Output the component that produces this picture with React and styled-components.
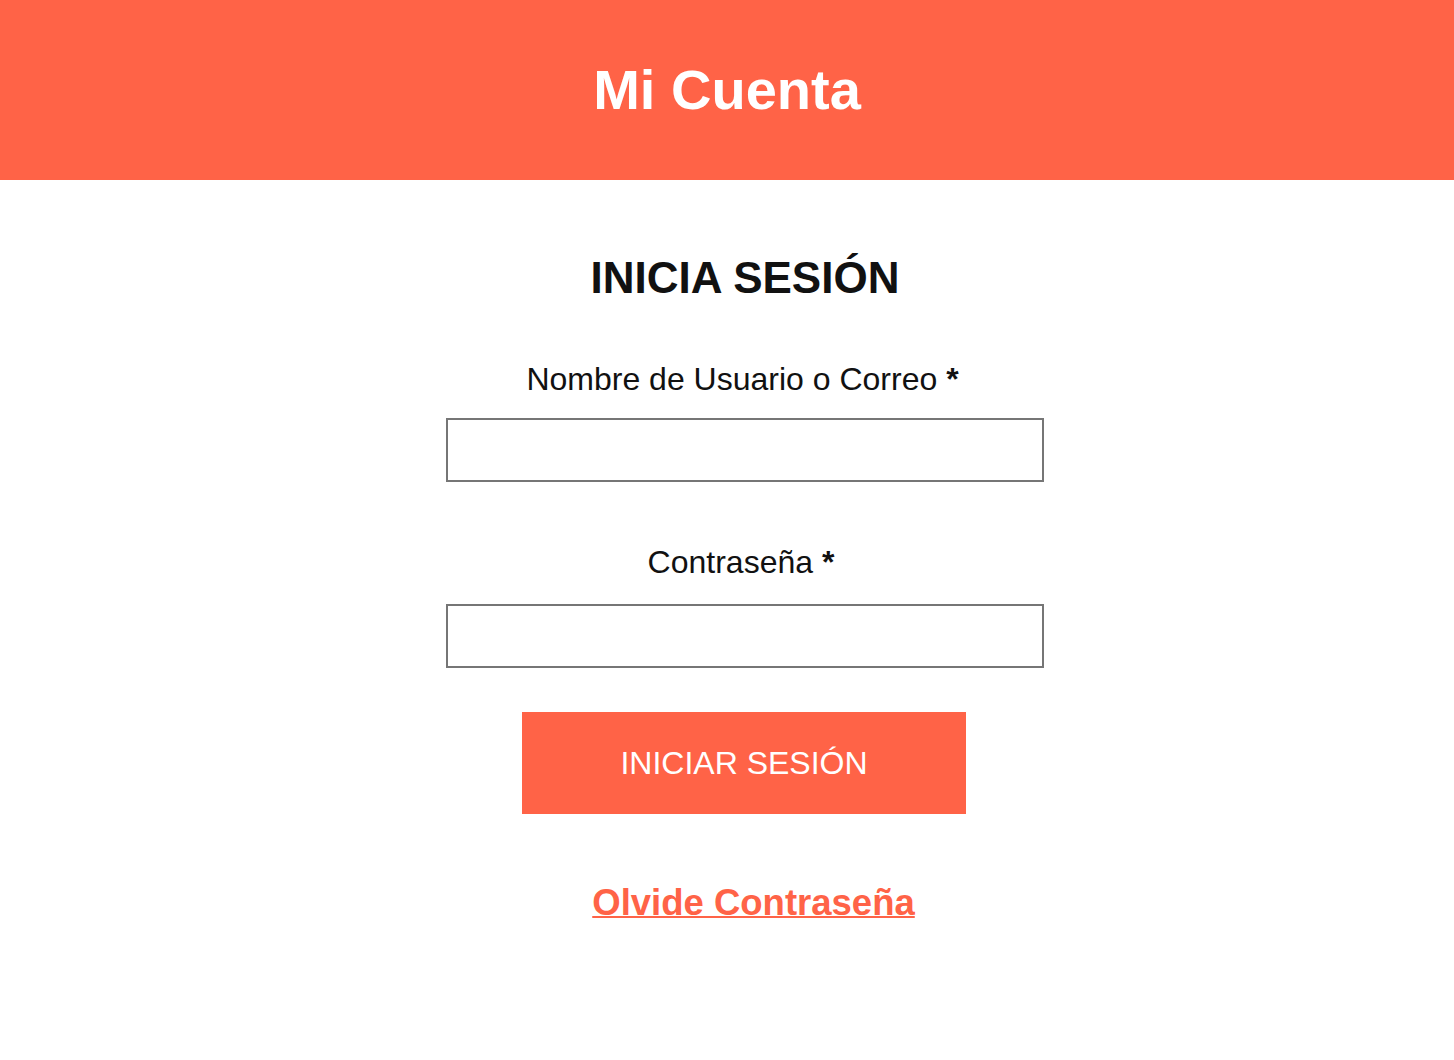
import React from "react";
import styled, { createGlobalStyle } from "styled-components";

const Global = createGlobalStyle`
  html, body { margin: 0; padding: 0; background: #fff; }
  body { font-family: "Liberation Sans", Arial, sans-serif; color: #111; }
  * { box-sizing: border-box; }
`;

const ACCENT = "#ff6347";

const Header = styled.header`
  height: 180px;
  background: ${ACCENT};
  display: flex;
  align-items: center;
  justify-content: center;
`;

const Title = styled.h1`
  margin: 0;
  color: #fff;
  font-size: 56px;
  line-height: 56px;
  font-weight: 700;
`;

const Main = styled.main`
  display: flex;
  flex-direction: column;
  align-items: center;
  padding: 72px 0 80px 36px;
`;

const Heading = styled.h2`
  margin: 0 0 56px;
  font-size: 44px;
  line-height: 52px;
  font-weight: 700;
  color: #111;
`;

const Form = styled.form`
  width: 598px;
  display: flex;
  flex-direction: column;
  align-items: center;
`;

const Field = styled.div`
  width: 100%;
  display: flex;
  flex-direction: column;
  align-items: center;
  gap: ${(p) => p.$gap}px;
  margin-bottom: ${(p) => p.$mb}px;
`;

const Label = styled.label`
  font-size: 32px;
  line-height: 38px;
  color: #111;
  padding-right: ${(p) => p.$shift || 0}px;
`;

const Req = styled.span`
  font-weight: 700;
`;

const Input = styled.input`
  width: 100%;
  height: 64px;
  border: 2px solid #767676;
  border-radius: 0;
  padding: 0 12px;
  font-size: 24px;
  font-family: inherit;
  background: #fff;
  outline: none;
`;

const Button = styled.button`
  width: 444px;
  height: 102px;
  margin-right: 2px;
  border: none;
  border-radius: 0;
  background: ${ACCENT};
  color: #fff;
  font-family: inherit;
  font-size: 32px;
  font-weight: 400;
  cursor: pointer;
`;

const LinkRow = styled.div`
  margin-top: 68px;
  padding-left: 17px;
`;

const Forgot = styled.a`
  color: ${ACCENT};
  font-size: 36.5px;
  line-height: 42px;
  font-weight: 700;
  text-decoration: underline;
  text-decoration-thickness: 2px;
  cursor: pointer;
`;

export default function App() {
  return (
    <>
      <Global />
      <Header>
        <Title>Mi Cuenta</Title>
      </Header>
      <Main>
        <Heading>INICIA SESIÓN</Heading>
        <Form onSubmit={(e) => e.preventDefault()}>
          <Field $gap={20} $mb={61}>
            <Label htmlFor="user" $shift={5}>
              Nombre de Usuario o Correo <Req>*</Req>
            </Label>
            <Input id="user" type="text" />
          </Field>
          <Field $gap={23} $mb={44}>
            <Label htmlFor="pass" $shift={8}>
              Contraseña <Req>*</Req>
            </Label>
            <Input id="pass" type="password" />
          </Field>
          <Button type="submit">INICIAR SESIÓN</Button>
        </Form>
        <LinkRow>
          <Forgot href="#">Olvide Contraseña</Forgot>
        </LinkRow>
      </Main>
    </>
  );
}
